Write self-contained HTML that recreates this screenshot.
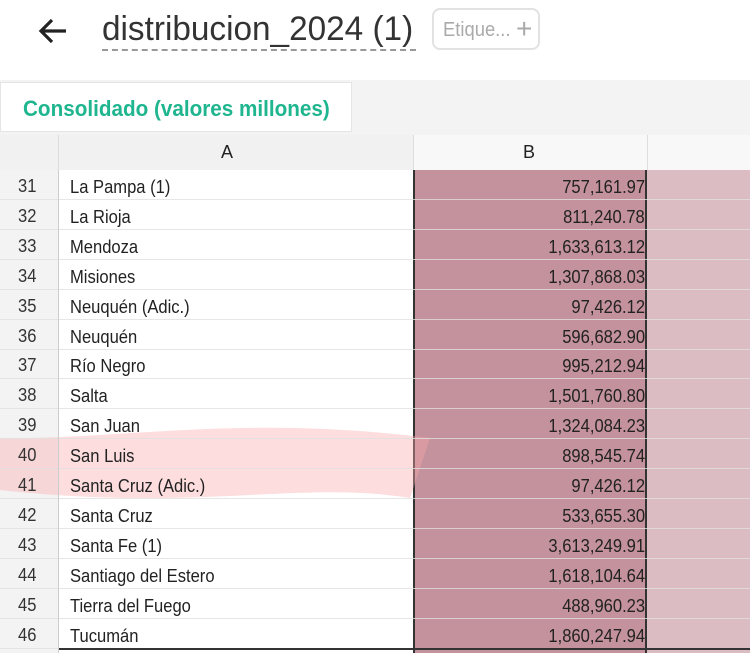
<!DOCTYPE html><html><head><style>
body{margin:0;width:750px;height:653px;overflow:hidden;background:#fff;font-family:"Liberation Sans",sans-serif;position:relative}
.t{position:absolute;white-space:nowrap}
.cond{display:inline-block;transform:scaleX(0.92);transform-origin:left center}
.rcond{display:inline-block;transform:scaleX(0.92);transform-origin:right center}
</style></head><body>
<svg class="t" style="left:36px;top:14px" width="34" height="34" viewBox="0 0 34 34"><path d="M30 17H6M16 6L5 17l11 11" fill="none" stroke="#222" stroke-width="3.2"/></svg>
<div class="t" style="left:102px;top:10px;font-size:34px;color:#333"><span class="cond" style="transform:scaleX(0.98)">distribucion_2024 (1)</span></div>
<div class="t" style="left:102px;top:49px;width:314px;border-top:2px dashed #999"></div>
<div class="t" style="left:432px;top:8px;width:108px;height:42px;border:2px solid #e2e2e2;border-radius:8px;box-sizing:border-box;color:#aaa;font-size:20px;line-height:40px;padding-left:9px"><span class="cond">Etique...</span><span style="position:absolute;left:82px;font-size:28px;top:-1px">+</span></div>
<div class="t" style="left:0;top:80px;width:750px;height:55px;background:#f3f3f3"></div>
<div class="t" style="left:0;top:82px;width:352px;height:50px;background:#fff;border:1px solid #e4e4e4;box-sizing:border-box"></div>
<div class="t" style="left:23px;top:96px;font-size:22px;font-weight:bold;color:#1fb58f"><span class="cond" style="transform:scaleX(0.94)">Consolidado (valores millones)</span></div>
<div class="t" style="left:0;top:135px;width:58px;height:35px;background:#f1f1f1"></div>
<div class="t" style="left:58px;top:135px;width:355px;height:35px;background:#f1f1f1;border-left:1px solid #ddd"></div>
<div class="t" style="left:413px;top:135px;width:234px;height:35px;background:#f8f8f8;border-left:1px solid #ddd"></div>
<div class="t" style="left:647px;top:135px;width:103px;height:35px;background:#f8f8f8;border-left:1px solid #ddd"></div>
<div class="t" style="left:221px;top:142px;font-size:18px;color:#222">A</div>
<div class="t" style="left:523px;top:142px;font-size:18px;color:#222">B</div>
<div class="t" style="left:0;top:170px;width:58px;height:483px;background:#f3f3f3"></div>
<div class="t" style="left:413px;top:170px;width:234px;height:483px;background:#c4929c;border-left:2px solid #333;border-right:2px solid #333;box-sizing:border-box"></div>
<div class="t" style="left:647px;top:170px;width:103px;height:483px;background:#dcbcc3"></div>
<svg class="t" style="left:0;top:420px" width="440" height="90"><path d="M0 18 C120 20,240 -6,430 18 L410 78 C300 60,200 92,0 70Z" fill="rgba(250,170,170,0.4)"/></svg>
<div id="rows"></div>
<div class="t" style="left:58px;top:648px;width:692px;border-top:2px solid #333"></div>
<script>
var d=[["31","La Pampa (1)","757,161.97"],["32","La Rioja","811,240.78"],["33","Mendoza","1,633,613.12"],["34","Misiones","1,307,868.03"],["35","Neuquén (Adic.)","97,426.12"],["36","Neuquén","596,682.90"],["37","Río Negro","995,212.94"],["38","Salta","1,501,760.80"],["39","San Juan","1,324,084.23"],["40","San Luis","898,545.74"],["41","Santa Cruz (Adic.)","97,426.12"],["42","Santa Cruz","533,655.30"],["43","Santa Fe (1)","3,613,249.91"],["44","Santiago del Estero","1,618,104.64"],["45","Tierra del Fuego","488,960.23"],["46","Tucumán","1,860,247.94"]];
var h="";d.forEach(function(r,i){var y=170+i*29.9;
h+='<div class="t" style="left:0;top:'+(y+29)+'px;width:750px;border-top:1px solid #e0e0e0;opacity:.8"></div>';
h+='<div class="t" style="left:18px;top:'+(y+6)+'px;font-size:18px;color:#333"><span class="cond">'+r[0]+'</span></div>';
h+='<div class="t" style="left:70px;top:'+(y+7)+'px;font-size:18px;color:#222"><span class="cond">'+r[1]+'</span></div>';
h+='<div class="t" style="right:105px;top:'+(y+7)+'px;font-size:18px;color:#222"><span class="rcond">'+r[2]+'</span></div>';});
document.getElementById("rows").innerHTML=h;
</script>
<div class="t" style="left:58px;top:170px;height:483px;border-left:1px solid #ccc"></div>
</body></html>
